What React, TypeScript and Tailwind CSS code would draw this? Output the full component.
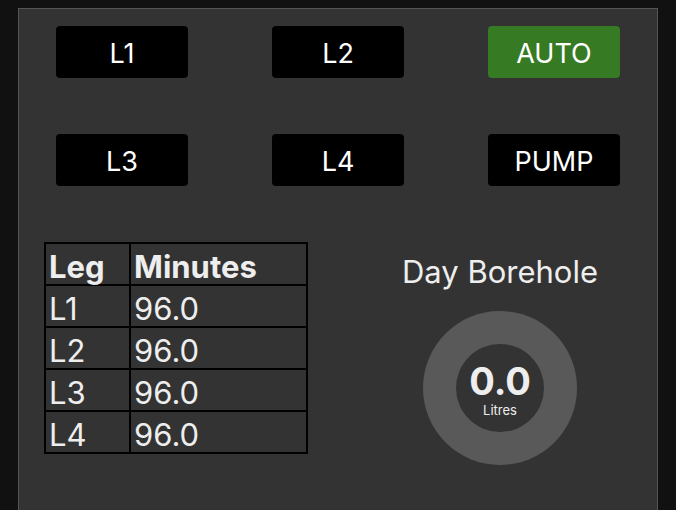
const buttons = [
  ['L1', 'L2', 'AUTO'],
  ['L3', 'L4', 'PUMP'],
]

const rows = [
  ['Leg', 'Minutes'],
  ['L1', '96.0'],
  ['L2', '96.0'],
  ['L3', '96.0'],
  ['L4', '96.0'],
]

export default function App() {
  return (
    <div className="w-[676px] h-[510px] bg-[#111111] overflow-hidden pt-2 pl-[18px] font-['Inter',sans-serif]">
      <div className="w-[640px] h-[520px] bg-[#333333] border border-[#555555]">
        {/* Buttons */}
        <div className="flex flex-col gap-[56px] pt-[17px]">
          {buttons.map((row, i) => (
            <div key={i} className="flex justify-center gap-[84px]">
              {row.map(b => (
                <div
                  key={b}
                  className={`w-[132px] h-[52px] rounded flex items-center justify-center pt-[3px] text-white text-[27px] leading-none ${b === 'AUTO' ? 'bg-[#367b24]' : 'bg-black'}`}
                >
                  {b}
                </div>
              ))}
            </div>
          ))}
        </div>

        {/* Lower part */}
        <div className="flex mt-[56px] pl-[25px]">
          {/* Leg table */}
          <div className="grid grid-cols-[83px_175px] gap-[2px] p-[2px] bg-black self-start text-[#eeeeee] text-[31px]">
            {rows.map((r, i) =>
              r.map((c, j) => (
                <div
                  key={`${i}-${j}`}
                  className={`h-[40px] leading-[46px] bg-[#333333] px-[3px] ${i === 0 ? 'font-bold' : ''}`}
                >
                  {c}
                </div>
              ))
            )}
          </div>

          {/* Gauge */}
          <div className="flex-1 flex flex-col items-center pl-[35px] pt-[14px]">
            <div className="text-[#eeeeee] text-[31px] leading-none">Day Borehole</div>
            <div className="mt-[24px] w-[154px] h-[154px] rounded-full bg-[#595959] flex items-center justify-center">
              <div className="w-[88px] h-[88px] rounded-full bg-[#333333] flex flex-col items-center justify-center text-[#eeeeee]">
                <div className="text-[38px] font-bold leading-none mt-[2px]">0.0</div>
                <div className="text-[13px] leading-none mt-[4px]">Litres</div>
              </div>
            </div>
          </div>
        </div>
      </div>
    </div>
  )
}
